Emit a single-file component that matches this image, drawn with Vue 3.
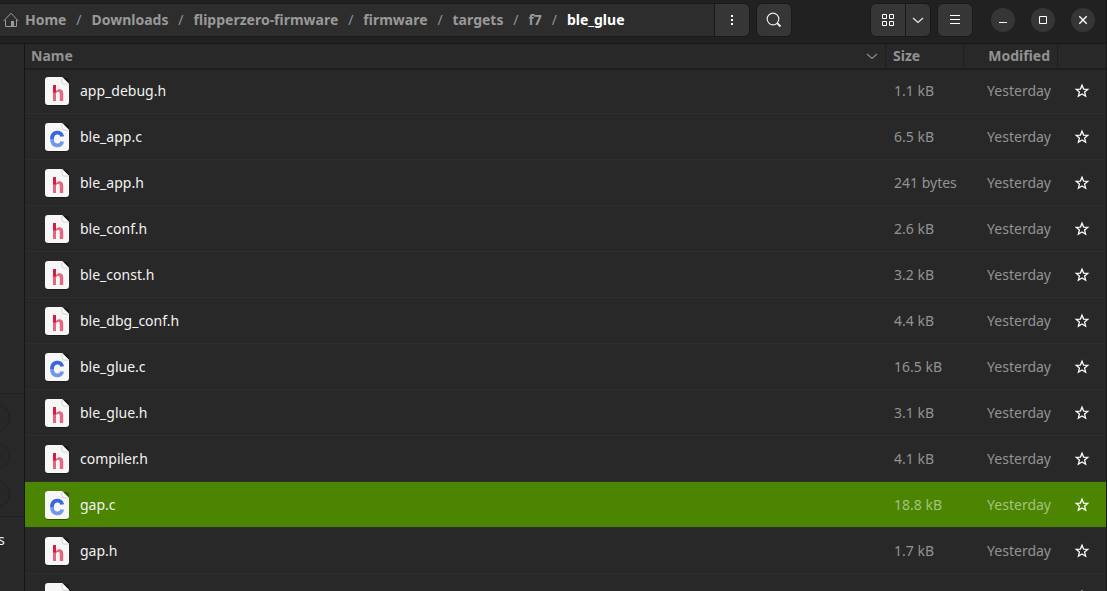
<script setup>
import { ref } from 'vue'

const crumbs = ['Home', 'Downloads', 'flipperzero-firmware', 'firmware', 'targets', 'f7', 'ble_glue']
const files = [
  ['app_debug.h', '1.1 kB'],
  ['ble_app.c', '6.5 kB'],
  ['ble_app.h', '241 bytes'],
  ['ble_conf.h', '2.6 kB'],
  ['ble_const.h', '3.2 kB'],
  ['ble_dbg_conf.h', '4.4 kB'],
  ['ble_glue.c', '16.5 kB'],
  ['ble_glue.h', '3.1 kB'],
  ['compiler.h', '4.1 kB'],
  ['gap.c', '18.8 kB'],
  ['gap.h', '1.7 kB'],
  ['hw_conf.h', '10.4 kB'],
].map(([name, size]) => ({ name, size, kind: name.slice(-1) }))
const selected = ref('gap.c')
</script>

<template>
  <div class="window">
    <header class="bar">
      <nav class="path" aria-label="Path">
        <svg class="home" width="16" height="16" viewBox="0 0 16 16" fill="none" stroke="#9b9b9b" aria-hidden="true">
          <path d="M.7 9 8 1.2 15.3 9M2.5 8v6.5h11V8" />
          <path d="M8 9h3v5.5H8z" fill="#9b9b9b" stroke="none" />
        </svg>
        <template v-for="(c, i) in crumbs" :key="c">
          <span v-if="i" class="sep">/</span>
          <a href="#" class="crumb" :class="{ current: i === crumbs.length - 1 }">{{ c }}</a>
        </template>
      </nav>
      <button class="btn dots" aria-label="Folder menu">
        <svg width="16" height="16" fill="#fff"><path d="M7 3h2v2H7zM7 7h2v2H7zM7 11h2v2H7z" /></svg>
      </button>
      <button class="btn search" aria-label="Search">
        <svg width="16" height="16" fill="none" stroke="#e8e8e8"><circle cx="7" cy="7" r="5.8" stroke-width="1.2" /><path d="m11 11 3.5 3.5" stroke-width="2" /></svg>
      </button>
      <div class="drag"></div>
      <button class="btn grid" aria-label="Icon view">
        <svg width="16" height="16" fill="none" stroke="#fff"><path d="M2.5 2.5h4v4h-4zM9.5 2.5h4v4h-4zM2.5 9.5h4v4h-4zM9.5 9.5h4v4h-4z" /></svg>
      </button>
      <button class="btn more" aria-label="View options">
        <svg width="16" height="16" fill="none" stroke="#e8e8e8" stroke-width="1.2"><path d="m3 6 5 4.5L13 6" /></svg>
      </button>
      <button class="btn menu" aria-label="Main menu">
        <svg width="16" height="16" stroke="#fff"><path d="M3 3.5h10M3 7.5h10M3 11.5h10" /></svg>
      </button>
      <div class="controls">
        <button class="round" aria-label="Minimize"><svg width="16" height="16" stroke="#fff"><path d="M4 10.5h8" /></svg></button>
        <button class="round" aria-label="Maximize"><svg width="16" height="16" fill="none" stroke="#fff"><path d="M4.5 4.5h7v7h-7z" /></svg></button>
        <button class="round" aria-label="Close"><svg width="16" height="16" stroke="#fff" stroke-width="1.4"><path d="m4.3 4.3 7.4 7.4M11.7 4.3l-7.4 7.4" /></svg></button>
      </div>
    </header>

    <div class="body">
      <aside class="side">
        <div class="tools"><i></i><i></i><i></i></div>
        <div class="tail">s</div>
      </aside>
      <table class="list">
        <colgroup><col /><col class="c-size" /><col class="c-mod" /><col class="c-star" /></colgroup>
        <thead>
          <tr>
            <th class="name-head">
              <div class="head">
                <span>Name</span>
                <svg width="12" height="8" fill="none" stroke="#8c8c8c" stroke-width="1.2"><path d="m1 2 5 4.500L11 2" /></svg>
              </div>
            </th>
            <th>Size</th>
            <th class="mod-head">Modified</th>
            <th aria-label="Starred"></th>
          </tr>
        </thead>
        <tbody>
          <tr v-for="f in files" :key="f.name" :class="{ selected: f.name === selected }" @click="selected = f.name">
            <td>
              <div class="file">
                <svg width="26" height="30" viewBox="0 0 26 30" aria-hidden="true">
                  <rect x="1" y="2" width="24" height="28" rx="3" fill="#000" opacity=".35" />
                  <path d="M4 1h14l7 7v18a3 3 0 0 1-3 3H4a3 3 0 0 1-3-3V4a3 3 0 0 1 3-3z" fill="#f7f7f7" />
                  <path d="M18 1v5a2 2 0 0 0 2 2h5z" fill="#fff" stroke="#c4c4c4" stroke-width=".8" />
                  <template v-if="f.kind === 'h'">
                    <path d="M9 15h3c1-1.200 2.200-1.800 3.500-1.800 2.400 0 3.700 1.600 3.700 4.200V25h-3.400v-7c0-1.400-.5-2-1.600-2-1 0-1.700.5-2.200 1.300V25H9z" fill="#e8657f" />
                    <path d="M9 9h3v7.500H9z" fill="#d81b43" />
                  </template>
                  <template v-else>
                    <path d="M18.200 19.500C17.300 25.200 8 25 8 17" fill="none" stroke="#7197eb" stroke-width="3.800" />
                    <path d="M18.200 14.500C17.300 8.800 8 9 8 17" fill="none" stroke="#3b67dc" stroke-width="3.800" />
                  </template>
                </svg>
                <span>{{ f.name }}</span>
              </div>
            </td>
            <td class="meta">{{ f.size }}</td>
            <td class="meta mod">Yesterday</td>
            <td class="star-cell">
              <button class="star" :aria-label="'Star ' + f.name">
                <svg width="16" height="16" fill="none" stroke="#fff" stroke-width="1.3"><path d="m8 2.200 1.600 3.900 4.200.3-3.200 2.700 1 4.100L8 11l-3.600 2.200 1-4.100L2.200 6.400l4.200-.3z" /></svg>
              </button>
            </td>
          </tr>
        </tbody>
      </table>
    </div>
  </div>
</template>

<style>
body { background: #282828; }
</style>
<style scoped>
* { box-sizing: border-box; }
.window { height: 100vh; overflow: hidden; display: flex; flex-direction: column; border-right: 1px solid #191919; background: #282828; color: #f2f2f2; font: 14px/20px "Noto Sans", "Open Sans", sans-serif; }
.bar { flex: none; height: 44px; display: flex; align-items: flex-start; padding: 3px 11px 0 0; background: #212121; border-bottom: 1px solid #171717; }
.path { width: 715px; height: 34px; display: flex; align-items: center; flex: none; padding-left: 3px; background: #2d2d2d; border: solid #191919; border-width: 1px 0; font-weight: 700; white-space: nowrap; }
.home { margin-right: 6px; }
.crumb { color: #999; text-decoration: none; }
.current { color: #fff; }
.sep { width: 25px; text-align: center; color: #929292; font-weight: 400; }
button { display: flex; align-items: center; justify-content: center; padding: 0; color: #fff; }
.btn { width: 36px; height: 34px; flex: none; background: #363636; border: 1px solid #191919; border-radius: 6px; }
.dots { border-radius: 0 6px 6px 0; margin-left: -1px; }
.search { margin-left: 6px; }
.drag { flex: 1; }
.grid { border-radius: 6px 0 0 6px; }
.more { width: 26px; margin-left: -1px; border-radius: 0 6px 6px 0; }
.menu { margin-left: 6px; }
.controls { display: flex; gap: 16px; margin: 5px 0 0 18px; }
.round { width: 24px; height: 24px; border: 0; border-radius: 12px; background: #363636; }
.body { flex: 1; min-height: 0; display: flex; }
.side { width: 25px; flex: none; overflow: hidden; border-right: 1px solid #151515; padding-top: 349px; }
.tools { height: 124px; border: solid #222; border-width: 1px 0; padding-top: 10px; }
.tools i { display: block; width: 28px; height: 28px; margin: 0 0 10px -18px; border: 1px solid #202020; border-radius: 14px; }
.tail { margin: 13px 0 0 -2px; }
.list { flex: 1; align-self: flex-start; table-layout: fixed; border-collapse: separate; border-spacing: 0; }
.c-size { width: 78px; }
.c-mod { width: 94px; }
.c-star { width: 49px; }
th { height: 24px; padding: 0 7px; text-align: left; color: #929292; border-left: 1px solid #1e1e1e; box-shadow: 0 2px #1e1e1e; }
.name-head { border-left: 0; padding-left: 6px; }
.mod-head { text-align: right; }
.head { display: flex; align-items: center; justify-content: space-between; }
td { height: 46px; padding: 0; border-bottom: 1px solid #2e2e2e; }
.file { display: flex; align-items: center; gap: 10px; padding-left: 19px; }
.meta { padding-left: 9px; color: #939393; }
.mod { padding: 0 6px 0 0; text-align: right; }
.star { width: 24px; height: 24px; margin-left: 13px; border: 0; background: none; }
.selected td { background: #4b8501; }
.selected .meta { color: #a5c280; }
</style>
